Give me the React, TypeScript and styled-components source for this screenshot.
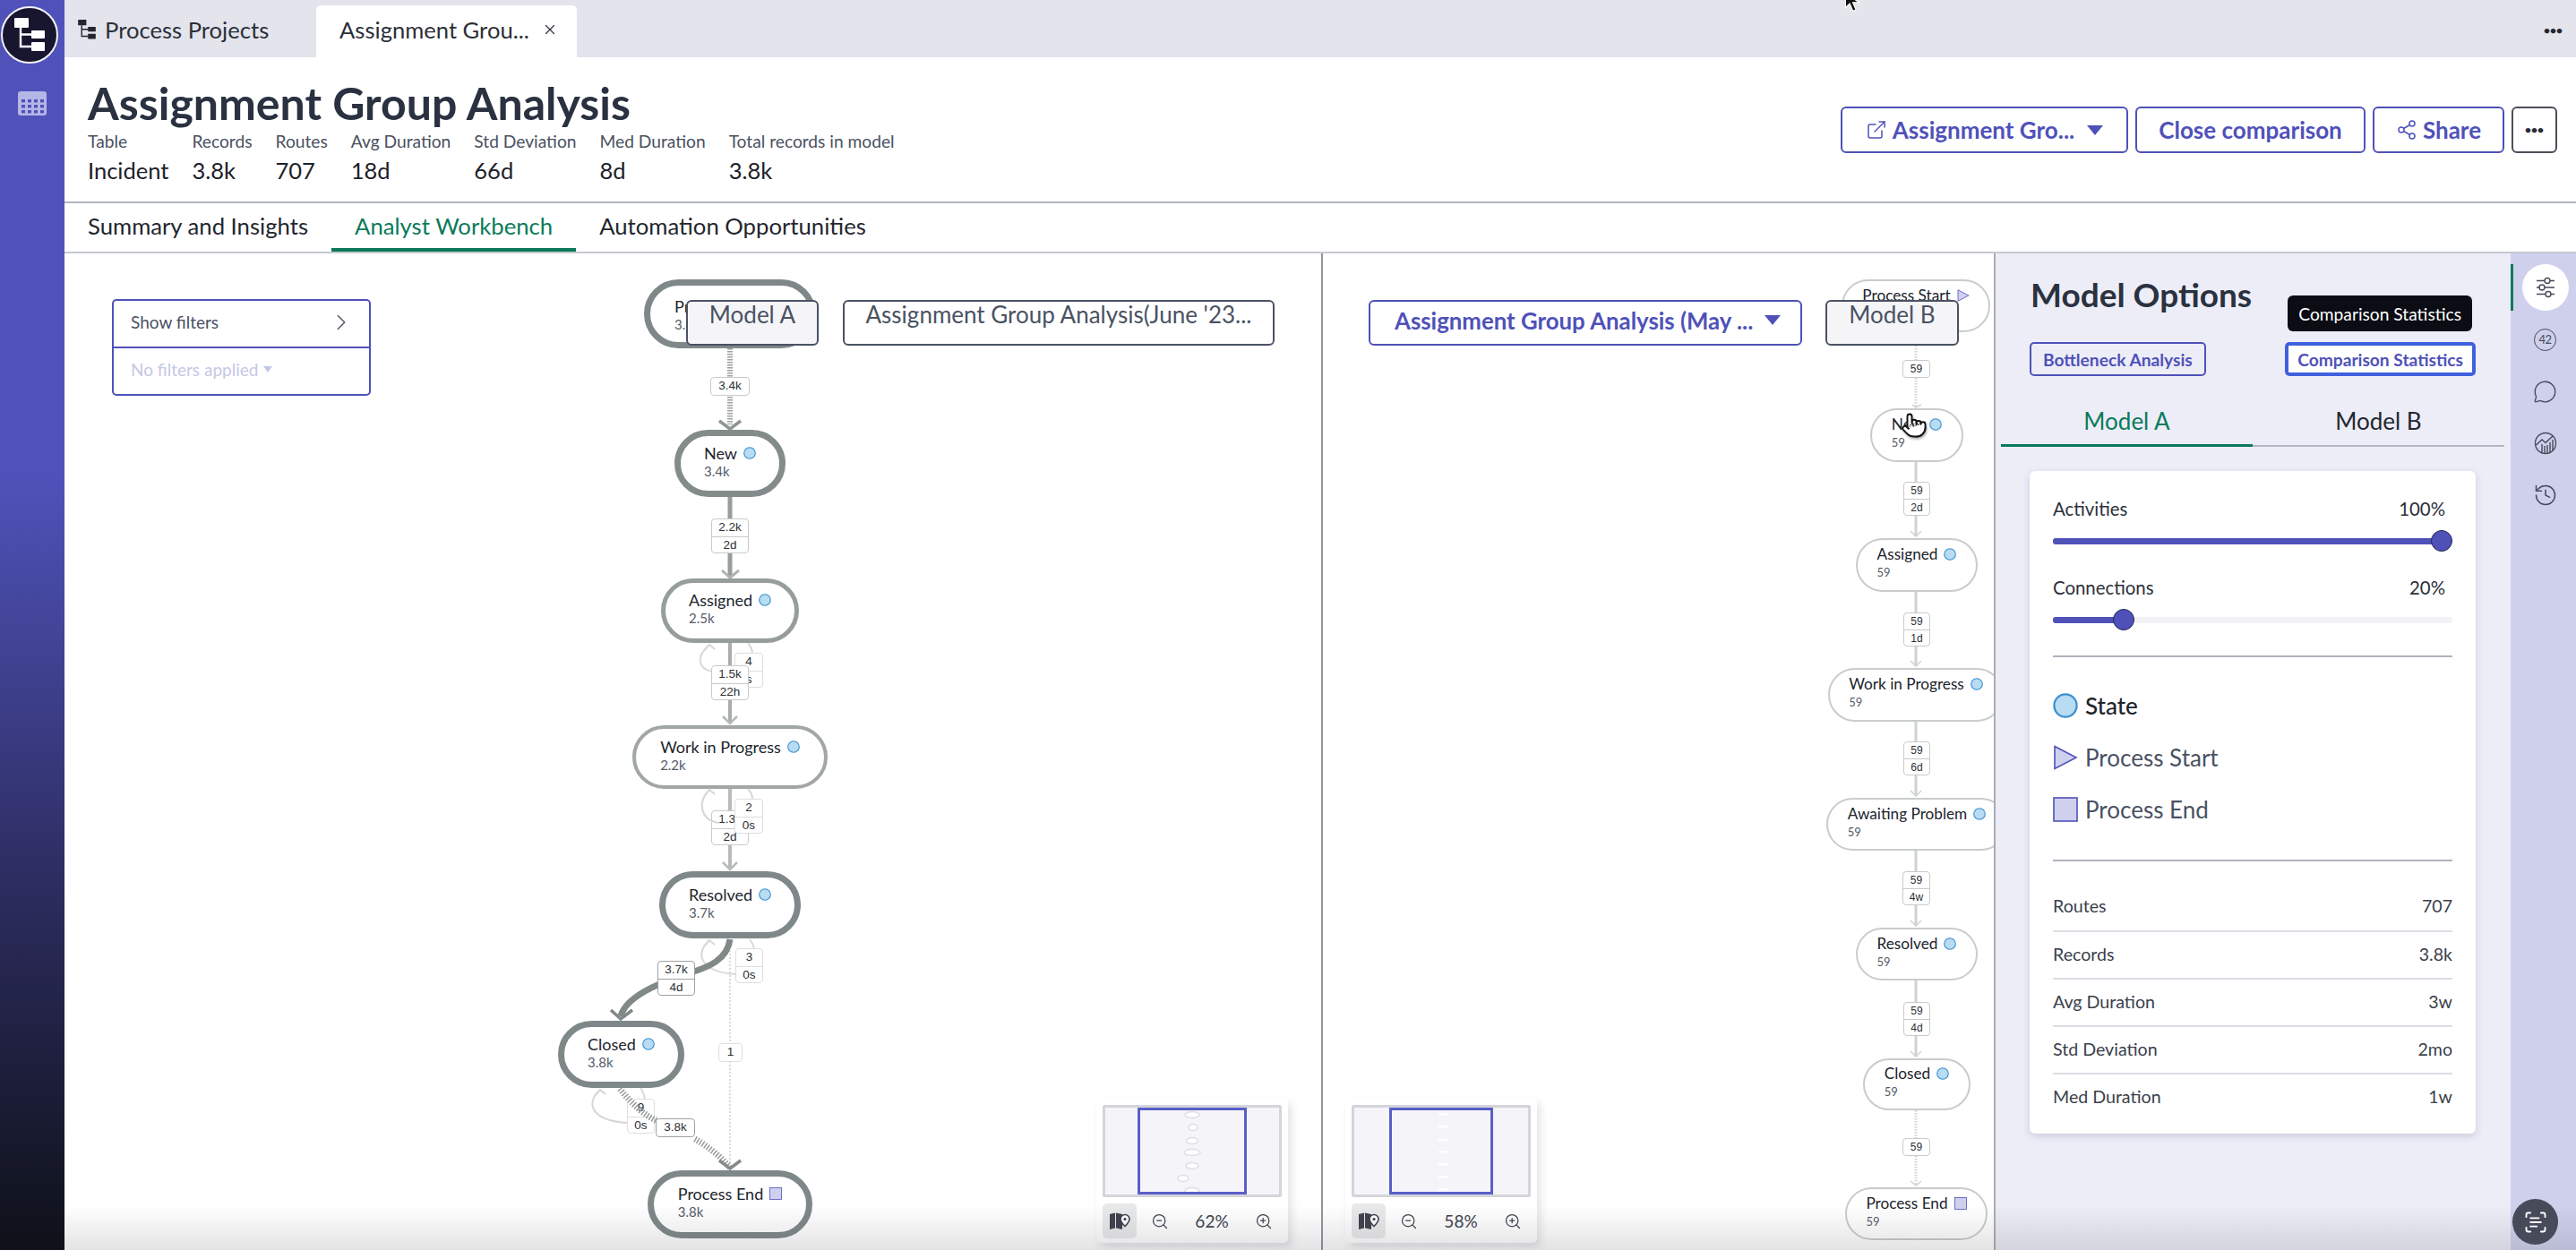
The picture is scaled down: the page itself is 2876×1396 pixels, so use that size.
import styled, { createGlobalStyle } from 'styled-components';
import {
  ChevronRight,
  ExternalLink,
  History,
  MessageCircle,
  Pointer,
  ScanText,
  Share2,
  X,
  ZoomIn,
  ZoomOut,
} from 'lucide-react';

const PURPLE = '#4f51b9';
const GREEN = '#0b7a5a';
const INK = '#2a3140';
const MUTED = '#4a5263';

const GlobalStyle = createGlobalStyle`
  html, body { margin: 0; padding: 0; width: 2876px; height: 1396px; overflow: hidden; background: #fff; }
  body { font-family: Lato, "Open Sans", sans-serif; color: #1d2129; }
  * { box-sizing: border-box; }
`;

const Page = styled.div`
  position: relative;
  display: flex;
  width: 2876px;
  height: 1396px;
  overflow: hidden;
`;

const BottomFade = styled.div`
  position: absolute;
  left: 72px;
  right: 0;
  bottom: 0;
  height: 50px;
  background: linear-gradient(rgba(60, 60, 70, 0), rgba(60, 60, 70, 0.14));
  pointer-events: none;
  z-index: 20;
`;

const LeftRail = styled.aside`
  position: relative;
  flex: 0 0 72px;
  display: flex;
  flex-direction: column;
  align-items: center;
  padding-top: 7px;
  gap: 31px;
  background: linear-gradient(#5052ba 0, #5052ba 38%, #4a4dac 43%, #2b2b5c 72%, #0e1118 100%);
`;

const LogoBadge = styled.div`
  width: 64px;
  height: 64px;
  margin-left: -6px;
  border-radius: 50%;
  background: #17162e;
  border: 2px solid #f2f2f6;
  display: flex;
  align-items: center;
  justify-content: center;
`;

const Main = styled.div`
  flex: 1;
  min-width: 0;
  display: flex;
  flex-direction: column;
`;

const TabStrip = styled.div`
  flex: 0 0 64px;
  display: flex;
  align-items: flex-end;
  background: #e3e4ec;
  position: relative;
`;

const ProjectTab = styled.div`
  width: 281px;
  height: 58px;
  display: flex;
  align-items: center;
  gap: 9px;
  padding: 0 0 4px 14px;
  font-size: 25.6px;
  color: #2b2f38;
`;

const ActiveTab = styled.div`
  width: 291px;
  height: 58px;
  display: flex;
  align-items: center;
  justify-content: space-between;
  padding: 0 21px 4px 26px;
  background: #fff;
  border-radius: 5px 5px 0 0;
  font-size: 25.6px;
  color: #2b2f38;
`;

const Dots = styled.span`
  font-size: 12px;
  font-weight: 900;
  line-height: 12px;
  letter-spacing: 0;
`;

const StripMore = styled.div`
  position: absolute;
  right: 15px;
  top: 28px;
  line-height: 0;
  color: #23262e;
`;

const MouseArrow = styled.svg`
  position: absolute;
  left: 1986px;
  top: -8px;
`;

const Header = styled.header`
  flex: 0 0 163px;
  display: flex;
  justify-content: space-between;
  padding: 21px 21px 0 26px;
  border-bottom: 2px solid #b0b5bf;
`;

const Title = styled.h1`
  margin: 0;
  font-size: 50px;
  line-height: 60px;
  font-weight: 700;
  color: ${INK};
`;

const Stats = styled.div`
  display: flex;
  gap: 26px;
`;

const Stat = styled.div`
  display: flex;
  flex-direction: column;
`;

const StatLabel = styled.span`
  font-size: 19.2px;
  line-height: 25px;
  color: #4a5160;
`;

const StatValue = styled.span`
  font-size: 25.5px;
  line-height: 40px;
  color: #1d2129;
`;

const Actions = styled.div`
  display: flex;
  gap: 8px;
  padding-top: 34px;
  height: 87px;
`;

const ActionButton = styled.button<{ $w: number; $dark?: boolean }>`
  width: ${(p) => p.$w}px;
  height: 52px;
  display: flex;
  align-items: center;
  justify-content: center;
  gap: 6px;
  background: #fff;
  border: 2px solid ${(p) => (p.$dark ? '#4a4e58' : PURPLE)};
  border-radius: 6px;
  font-family: inherit;
  font-size: 26px;
  font-weight: 700;
  color: ${(p) => (p.$dark ? '#2a2d36' : PURPLE)};
`;

const Caret = styled.span<{ $size?: number; $gap?: number }>`
  display: inline-block;
  width: 0;
  height: 0;
  margin-left: ${(p) => p.$gap ?? 0}px;
  border-left: ${(p) => p.$size ?? 9}px solid transparent;
  border-right: ${(p) => p.$size ?? 9}px solid transparent;
  border-top: ${(p) => (p.$size ?? 9) + 2}px solid currentColor;
`;

const NavTabs = styled.nav`
  flex: 0 0 54px;
  display: flex;
  border-bottom: 2px solid #c6c9cf;
`;

const NavTab = styled.div<{ $active?: boolean }>`
  height: 54px;
  padding: 0 26px;
  display: flex;
  align-items: center;
  font-size: 25.7px;
  color: ${(p) => (p.$active ? GREEN : '#23262e')};
  border-bottom: 4px solid ${(p) => (p.$active ? GREEN : 'transparent')};
`;

const Workspace = styled.div`
  flex: 1;
  min-height: 0;
  display: flex;
`;

const PaneA = styled.section`
  position: relative;
  flex: 0 0 1405px;
  border-right: 2px solid #8f949e;
  overflow: hidden;
`;

const PaneB = styled.section`
  position: relative;
  flex: 0 0 751px;
  border-right: 2px solid #a9adb8;
  overflow: hidden;
`;

const FilterBox = styled.div`
  position: absolute;
  left: 53px;
  top: 51px;
  width: 289px;
  height: 108px;
  display: flex;
  flex-direction: column;
  border: 2px solid ${PURPLE};
  border-radius: 5px;
  background: #fff;
`;

const FilterRow = styled.div`
  flex: 1;
  display: flex;
  align-items: center;
  justify-content: space-between;
  padding: 0 16px 4px 19px;
  font-size: 19px;
  color: #4a5263;

  & + & {
    border-top: 2px solid ${PURPLE};
    color: #c5c7e6;
    justify-content: flex-start;
    gap: 6px;
  }
`;

const Chip = styled.div<{ $x: number; $w: number; $tint?: boolean }>`
  position: absolute;
  left: ${(p) => p.$x}px;
  top: 52px;
  width: ${(p) => p.$w}px;
  height: 51px;
  text-align: center;
  white-space: nowrap;
  font-size: 26px;
  line-height: 28px;
  color: ${MUTED};
  background: ${(p) => (p.$tint ? '#f5f5f8' : '#fff')};
  border: 2px solid ${MUTED};
  border-radius: 6px;
  z-index: 5;
`;

const VersionSelect = styled.div`
  position: absolute;
  left: 51px;
  top: 52px;
  width: 484px;
  height: 51px;
  display: flex;
  align-items: center;
  justify-content: space-between;
  padding: 0 22px 6px 27px;
  font-size: 25.8px;
  font-weight: 700;
  color: ${PURPLE};
  border: 2px solid ${PURPLE};
  border-radius: 6px;
  background: #fff;
  z-index: 5;
  white-space: nowrap;
`;

const EdgeLayer = styled.svg`
  position: absolute;
  left: 0;
  top: 0;
  pointer-events: none;
`;

const NodeShell = styled.div<{ $x: number; $y: number; $w: number; $h: number; $bw: number; $c: string }>`
  position: absolute;
  left: ${(p) => p.$x}px;
  top: ${(p) => p.$y}px;
  width: ${(p) => p.$w}px;
  height: ${(p) => p.$h}px;
  display: flex;
  align-items: center;
  justify-content: center;
  background: #fff;
  border: ${(p) => p.$bw}px solid ${(p) => p.$c};
  border-radius: 999px;
`;

const NodeBody = styled.div<{ $drop?: number }>`
  display: flex;
  flex-direction: column;
  margin-top: ${(p) => (p.$drop ?? 0) - 6}px;
`;

const NodeLabel = styled.div<{ $fs: number }>`
  display: flex;
  align-items: center;
  gap: 7px;
  font-size: ${(p) => p.$fs}px;
  line-height: 22px;
  white-space: nowrap;
  color: #20242c;
`;

const NodeCount = styled.div<{ $fs: number }>`
  margin-top: 1px;
  font-size: ${(p) => p.$fs}px;
  line-height: 17px;
  color: #555b69;
`;

const EdgeLabel = styled.div<{ $x: number; $y: number; $w: number; $fs: number; $rh: number; $c?: string }>`
  position: absolute;
  left: ${(p) => p.$x}px;
  top: ${(p) => p.$y}px;
  width: ${(p) => p.$w}px;
  background: #fff;
  border: 1.5px solid ${(p) => p.$c ?? '#c8cacc'};
  border-radius: 4px;
  font-family: "Liberation Sans", Arial, sans-serif;
  font-size: ${(p) => p.$fs}px;
  color: #2b2f36;
  text-align: center;

  & > div {
    height: ${(p) => p.$rh}px;
    line-height: ${(p) => p.$rh}px;
  }

  & > div + div {
    border-top: 1.5px solid ${(p) => p.$c ?? '#c8cacc'};
  }
`;

const HandCursor = styled.div`
  position: absolute;
  left: 645px;
  top: 177px;
  z-index: 6;
  filter: drop-shadow(1px 2px 1px rgba(0, 0, 0, 0.3));
  line-height: 0;
`;

const MiniCard = styled.div<{ $x: number }>`
  position: absolute;
  left: ${(p) => p.$x}px;
  top: 944px;
  width: 214px;
  height: 161px;
  padding: 7px;
  background: #fff;
  border-radius: 5px;
  box-shadow: 4px 5px 10px rgba(60, 65, 80, 0.14);
  z-index: 6;
`;

const MiniFrame = styled.div`
  position: relative;
  height: 103px;
  display: flex;
  justify-content: center;
  background: #f5f5f9;
  border: 3px solid #d3d5da;
  border-radius: 2px;
`;

const MiniViewport = styled.div<{ $w: number }>`
  width: ${(p) => p.$w}px;
  border: 3px solid #5a5fc8;
  line-height: 0;
`;

const MiniControls = styled.div`
  display: flex;
  align-items: center;
  margin-top: 7px;
  height: 39px;
  color: #3d424e;
`;

const MapButton = styled.div`
  width: 38px;
  height: 39px;
  margin-right: 7px;
  display: flex;
  align-items: center;
  justify-content: center;
  background: #e8e9ea;
  border-radius: 5px;
`;

const ZoomButton = styled.div`
  width: 38px;
  display: flex;
  justify-content: center;
`;

const ZoomValue = styled.div`
  width: 78px;
  text-align: center;
  font-size: 19px;
`;

const ModelPanel = styled.aside`
  position: relative;
  flex: 0 0 575px;
  display: flex;
  flex-direction: column;
  background: #ecedf7;
`;

const PanelTitle = styled.h2`
  margin: 21px 0 0 39px;
  font-size: 37px;
  line-height: 50px;
  font-weight: 700;
  color: ${INK};
`;

const PanelButtons = styled.div`
  display: flex;
  justify-content: space-between;
  margin: 28px 39px 0 38px;
`;

const PanelButton = styled.button<{ $focus?: boolean }>`
  position: relative;
  height: 38px;
  padding: 0 ${(p) => (p.$focus ? 10 : 13)}px;
  background: ${(p) => (p.$focus ? '#fff' : 'transparent')};
  border: ${(p) => (p.$focus ? '4px solid #4060dd' : `2px solid ${PURPLE}`)};
  border-radius: 5px;
  font-family: inherit;
  font-size: 19.2px;
  font-weight: 700;
  color: ${PURPLE};
`;

const Tooltip = styled.div`
  position: absolute;
  right: 0;
  top: -56px;
  height: 40px;
  padding: 0 12px;
  display: flex;
  align-items: center;
  background: #0b0c14;
  border-radius: 6px;
  font-size: 19.2px;
  font-weight: 400;
  color: #fff;
  white-space: nowrap;
`;

const ModelTabs = styled.div`
  display: flex;
  margin: 30px 7px 0 6px;
  height: 49px;
`;

const ModelTab = styled.div<{ $active?: boolean }>`
  flex: 1;
  text-align: center;
  font-size: 26px;
  line-height: 40px;
  color: ${(p) => (p.$active ? GREEN : '#23262e')};
  border-bottom: ${(p) => (p.$active ? `3px solid ${GREEN}` : '2px solid #b4b7c2')};
`;

const OptionsCard = styled.div`
  margin: 27px 39px 0 38px;
  height: 740px;
  padding: 30px 26px 0;
  background: #fff;
  border-radius: 6px;
  box-shadow: 0 3px 8px rgba(70, 75, 110, 0.2);
`;

const SliderHead = styled.div`
  display: flex;
  justify-content: space-between;
  padding-right: 8px;
  font-size: 20.4px;
  line-height: 24px;
  color: #2c303a;
`;

const SliderTrack = styled.div`
  position: relative;
  height: 7px;
  margin: 21px 0 36px;
  background: #f3f3f5;
  border-radius: 3px;
`;

const SliderFill = styled.div<{ $w: number }>`
  width: ${(p) => p.$w}px;
  height: 100%;
  background: ${PURPLE};
  border-radius: 3px;
`;

const SliderThumb = styled.div<{ $x: number }>`
  position: absolute;
  left: ${(p) => p.$x}px;
  top: -9px;
  width: 24px;
  height: 24px;
  border-radius: 50%;
  background: ${PURPLE};
  border: 1.5px solid #23284f;
`;

const PanelRule = styled.hr<{ $mt: number }>`
  margin: ${(p) => p.$mt}px 0 0;
  border: 0;
  border-top: 2px solid #b0b3bd;
`;

const Legend = styled.div`
  display: flex;
  flex-direction: column;
  gap: 30px;
  margin-top: 40px;
`;

const LegendRow = styled.div<{ $strong?: boolean }>`
  display: flex;
  align-items: center;
  gap: 8px;
  height: 28px;
  font-size: 26px;
  font-weight: ${(p) => (p.$strong ? 500 : 400)};
  color: ${(p) => (p.$strong ? '#20242c' : MUTED)};
`;

const MetricList = styled.div`
  margin-top: 24px;
`;

const MetricRow = styled.div`
  display: flex;
  justify-content: space-between;
  align-items: center;
  height: 53px;
  padding-bottom: 3px;
  font-size: 19.6px;
  color: #3a3f4b;

  & + & {
    border-top: 2px solid #dcdde4;
  }
`;

const IconRail = styled.aside`
  position: relative;
  flex: 1;
  display: flex;
  flex-direction: column;
  align-items: center;
  padding: 12px 0 0 4px;
  background: #cfd0ec;
  color: #474a59;
`;

const RailMarker = styled.div`
  position: absolute;
  left: 0;
  top: 12px;
  width: 3px;
  height: 52px;
  background: ${GREEN};
`;

const RailItem = styled.div<{ $active?: boolean }>`
  width: 52px;
  height: 52px;
  margin-bottom: 6px;
  display: flex;
  align-items: center;
  justify-content: center;
  border-radius: 50%;
  background: ${(p) => (p.$active ? '#fff' : 'transparent')};
`;

const CountBadge = styled.div`
  width: 25px;
  height: 25px;
  display: flex;
  align-items: center;
  justify-content: center;
  border: 1.5px solid #474a59;
  border-radius: 50%;
  font-size: 13px;
  letter-spacing: -0.5px;
`;

const ScanButton = styled.div`
  position: absolute;
  left: 2px;
  bottom: 6px;
  width: 51px;
  height: 51px;
  display: flex;
  align-items: center;
  justify-content: center;
  border-radius: 50%;
  background: #474a59;
  color: #fff;
  z-index: 21;
`;

type Shape = 'dot' | 'start' | 'end';

const Marker = ({ shape, size = 14 }: { shape: Shape; size?: number }) => (
  <svg width={size} height={size} viewBox="0 0 28 28">
    {shape === 'dot' && <circle cx="14" cy="14" r="12.6" fill="#b8dcf2" stroke="#3b8fd0" strokeWidth="2.2" />}
    {shape === 'start' && <path d="M2 1.5 L26 14 L2 26.5 Z" fill="#cfd0ee" stroke={PURPLE} strokeWidth="1.6" />}
    {shape === 'end' && <rect x="1" y="1" width="26" height="26" fill="#cfd0ee" stroke={PURPLE} strokeWidth="1.6" />}
  </svg>
);

const TreeLogo = ({ color, size }: { color: string; size: number }) => (
  <svg width={size} height={size} viewBox="0 0 36 38">
    <rect x="1" y="0" width="16" height="11" rx="1" fill={color} />
    <rect x="20" y="14" width="15" height="9" rx="1" fill={color} />
    <rect x="20" y="27" width="15" height="10" rx="1" fill={color} />
    <path d="M8 11 V32 H20 M8 18.5 H20" fill="none" stroke={color} strokeWidth="2.4" />
  </svg>
);

const GridIcon = () => (
  <svg width="32" height="27" viewBox="0 0 32 27">
    <rect width="32" height="27" rx="3" fill="#b4b6e6" />
    {[9, 15, 21].map((y) =>
      [4, 11, 18, 25].map((x) => <rect key={`${x}-${y}`} x={x} y={y} width="4" height="3.4" fill={PURPLE} />),
    )}
  </svg>
);

const SlidersIcon = () => (
  <svg width="24" height="24" viewBox="0 0 24 24" fill="none" stroke="#474a59" strokeWidth="1.4">
    <path d="M2 4.5 H11 M17 4.5 H22 M2 12 H5 M11 12 H22 M2 19.5 H12 M18 19.5 H22" />
    <circle cx="14" cy="4.5" r="3" />
    <circle cx="8" cy="12" r="3" />
    <circle cx="15" cy="19.5" r="3" />
  </svg>
);

const GrowthIcon = () => (
  <svg width="26" height="26" viewBox="0 0 26 26" fill="none" stroke="#474a59" strokeWidth="1.4">
    <circle cx="13" cy="13" r="11.5" />
    <path d="M2.5 15 L9 9 L13 12.5 L21 5" />
    <path d="M9 14 V24 M12 16 V24.6 M15 15 V24.6 M18 12 V23.5 M21 9 V21" />
  </svg>
);

const MapIcon = () => (
  <svg width="24" height="22" viewBox="0 0 24 22">
    <path d="M1 3 L7 1.5 V18.5 L1 20 Z" fill="#3d424e" />
    <path d="M8 1.5 L15 3 V20 L8 18.5 Z" fill="#3d424e" />
    <path
      d="M18 3.5 a5 5 0 0 1 5 5 c0 3 -5 8 -5 8 c0 0 -5 -5 -5 -8 a5 5 0 0 1 5 -5 Z"
      fill="#fff"
      stroke="#3d424e"
      strokeWidth="1.6"
    />
    <circle cx="18" cy="8.5" r="1.6" fill="#3d424e" />
  </svg>
);

type GraphNode = {
  label: string;
  count: string;
  x: number;
  y: number;
  w: number;
  h: number;
  bw: number;
  c: string;
  shape: Shape;
  drop?: number;
};

type Edge = { d: string; w: number; c: string; dash?: string };

type Badge = { rows: string[]; x: number; y: number; w: number; c?: string };

const A_X = 72;
const B_X = 1478;
const TOP = 281;

const nodesA: GraphNode[] = [
  { label: 'Process Start', count: '3.8k', x: 719, y: 310, w: 192, h: 77, bw: 7, c: '#7f8888', shape: 'start', drop: 6 },
  { label: 'New', count: '3.4k', x: 753, y: 478, w: 124, h: 75, bw: 7, c: '#848b8b', shape: 'dot' },
  { label: 'Assigned', count: '2.5k', x: 738, y: 644, w: 154, h: 72, bw: 5.5, c: '#979d9d', shape: 'dot' },
  { label: 'Work in Progress', count: '2.2k', x: 706, y: 808, w: 218, h: 71, bw: 4.5, c: '#a1a6a6', shape: 'dot' },
  { label: 'Resolved', count: '3.7k', x: 736, y: 971, w: 158, h: 75, bw: 7.5, c: '#7f8888', shape: 'dot' },
  { label: 'Closed', count: '3.8k', x: 623, y: 1138, w: 141, h: 75, bw: 7.5, c: '#7f8888', shape: 'dot' },
  { label: 'Process End', count: '3.8k', x: 723, y: 1305, w: 184, h: 76, bw: 7.5, c: '#7f8888', shape: 'end' },
];

const nodesB: GraphNode[] = [
  { label: 'Process Start', count: '59', x: 2057, y: 310, w: 166, h: 59, bw: 2, c: '#c9cccc', shape: 'start' },
  { label: 'New', count: '59', x: 2089, y: 454, w: 104, h: 60, bw: 2, c: '#c9cccc', shape: 'dot' },
  { label: 'Assigned', count: '59', x: 2073, y: 599, w: 136, h: 60, bw: 2, c: '#c9cccc', shape: 'dot' },
  { label: 'Work in Progress', count: '59', x: 2042, y: 744, w: 196, h: 60, bw: 2, c: '#c9cccc', shape: 'dot' },
  { label: 'Awaiting Problem', count: '59', x: 2040, y: 889, w: 202, h: 59, bw: 2, c: '#c9cccc', shape: 'dot' },
  { label: 'Resolved', count: '59', x: 2073, y: 1034, w: 136, h: 59, bw: 2, c: '#c9cccc', shape: 'dot' },
  { label: 'Closed', count: '59', x: 2081, y: 1180, w: 120, h: 58, bw: 2, c: '#c9cccc', shape: 'dot' },
  { label: 'Process End', count: '59', x: 2061, y: 1324, w: 159, h: 59, bw: 2, c: '#c9cccc', shape: 'end' },
];

const loop = (fromX: number, fromY: number, reach: number, toX: number, toY: number) =>
  `M${fromX} ${fromY} C${reach} ${fromY - 3} ${reach - 4} ${toY + 14} ${toX} ${toY} M${toX - 5} ${toY + 6} L${toX} ${toY} L${toX + 6} ${toY + 5}`;

const edgesA: Edge[] = [
  { d: 'M815 387 V472', w: 6, c: '#9aa0a0', dash: '1.5 1.5' },
  { d: 'M803 468 L815 477 L827 468', w: 3.5, c: '#8f9494' },
  { d: 'M815 553 V642', w: 5, c: '#979d9d' },
  { d: 'M806 635 L815 643 L825 635', w: 3, c: '#aeb2b2' },
  { d: 'M815 716 V806', w: 4, c: '#a9adad' },
  { d: 'M807 798 L815 806 L823 798', w: 2.5, c: '#b5b8b8' },
  { d: 'M815 879 V969', w: 4, c: '#b8bbbb' },
  { d: 'M807 961 L815 969 L823 961', w: 2.5, c: '#b8bbbb' },
  { d: 'M815 1047 V1305', w: 2, c: '#dadbdb', dash: '2 2' },
  { d: loop(795, 748, 780, 792, 718), w: 2, c: '#d6d8d8' },
  { d: 'M835 716 Q840 722 840 728', w: 2, c: '#d6d8d8' },
  { d: 'M835 879 Q840 884 840 890', w: 2, c: '#d6d8d8' },
  { d: loop(821, 1086, 780, 792, 1048), w: 2, c: '#d6d8d8' },
  { d: 'M837 1047 Q841 1052 842 1058', w: 2, c: '#d6d8d8' },
  { d: loop(700, 1252, 658, 670, 1215), w: 2, c: '#d6d8d8' },
  { d: 'M715 1213 Q719 1218 720 1226', w: 2, c: '#d6d8d8' },
  { d: 'M815 1047 C812 1070 790 1078 775 1083 S700 1105 693 1133', w: 7, c: '#808888' },
  { d: 'M682 1126 L693 1136 L706 1126', w: 3.5, c: '#808888' },
  { d: 'M776 1270 C790 1278 805 1290 815 1302', w: 7, c: '#8a8f8f', dash: '1.3 2' },
  { d: 'M803 1294 L815 1303 L827 1294', w: 3.5, c: '#858b8b' },
];

const edgesOverA: Edge[] = [
  { d: loop(803, 917, 782, 792, 880), w: 2, c: '#d6d8d8' },
  { d: 'M692 1214 C705 1230 718 1243 734 1250', w: 7, c: '#8a8f8f', dash: '1.3 2' },
];

const badgesA: Badge[] = [
  { rows: ['3.4k'], x: 793, y: 419, w: 44 },
  { rows: ['2.2k', '2d'], x: 794, y: 577, w: 42 },
  { rows: ['4', 's'], x: 820, y: 727, w: 32, c: '#dcdee0' },
  { rows: ['1.5k', '22h'], x: 794, y: 741, w: 42 },
  { rows: ['1.3k', '2d'], x: 794, y: 903, w: 42 },
  { rows: ['3.7k', '4d'], x: 734, y: 1071, w: 42, c: '#9ea2a6' },
  { rows: ['3', '0s'], x: 821, y: 1057, w: 31, c: '#dcdee0' },
  { rows: ['1'], x: 802, y: 1163, w: 27, c: '#dcdee0' },
  { rows: ['9', '0s'], x: 700, y: 1225, w: 31, c: '#dcdee0' },
];

const badgesOverA: Badge[] = [
  { rows: ['2', '0s'], x: 820, y: 890, w: 32, c: '#dcdee0' },
  { rows: ['3.8k'], x: 732, y: 1247, w: 44, c: '#9ea2a6' },
];

const edgesB: Edge[] = [
  { d: 'M2140 369 V452', w: 3, c: '#d5d6d6', dash: '1.5 1.5' },
  { d: 'M2136 450 L2140 453 L2146 450', w: 1.5, c: '#cfd2d2' },
  { d: 'M2140 514 V597', w: 3, c: '#cfd2d2' },
  { d: 'M2134 591 L2140 597 L2146 591', w: 1.5, c: '#cfd2d2' },
  { d: 'M2140 659 V742', w: 3, c: '#cfd2d2' },
  { d: 'M2134 736 L2140 742 L2146 736', w: 1.5, c: '#cfd2d2' },
  { d: 'M2140 804 V887', w: 3, c: '#cfd2d2' },
  { d: 'M2134 881 L2140 887 L2146 881', w: 1.5, c: '#cfd2d2' },
  { d: 'M2140 948 V1032', w: 3, c: '#cfd2d2' },
  { d: 'M2134 1026 L2140 1032 L2146 1026', w: 1.5, c: '#cfd2d2' },
  { d: 'M2140 1093 V1178', w: 3, c: '#cfd2d2' },
  { d: 'M2134 1172 L2140 1178 L2146 1172', w: 1.5, c: '#cfd2d2' },
  { d: 'M2140 1238 V1322', w: 3, c: '#d5d6d6', dash: '1.5 1.5' },
  { d: 'M2134 1317 L2140 1322 L2146 1317', w: 1.5, c: '#cfd2d2' },
];

const badgesB: Badge[] = [
  { rows: ['59'], x: 2125, y: 400, w: 31 },
  { rows: ['59', '2d'], x: 2126, y: 536, w: 30 },
  { rows: ['59', '1d'], x: 2126, y: 682, w: 30 },
  { rows: ['59', '6d'], x: 2126, y: 826, w: 30 },
  { rows: ['59', '4w'], x: 2125, y: 971, w: 31 },
  { rows: ['59', '4d'], x: 2126, y: 1117, w: 30 },
  { rows: ['59'], x: 2125, y: 1269, w: 31 },
];

const Edges = ({ edges, ox }: { edges: Edge[]; ox: number }) => (
  <EdgeLayer width="1405" height="1115" viewBox={`${ox} ${TOP} 1405 1115`} fill="none">
    {edges.map((e) => (
      <path key={e.d} d={e.d} stroke={e.c} strokeWidth={e.w} strokeDasharray={e.dash} />
    ))}
  </EdgeLayer>
);

const Nodes = ({ nodes, ox, fs, cfs }: { nodes: GraphNode[]; ox: number; fs: number; cfs: number }) => (
  <>
    {nodes.map((n) => (
      <NodeShell key={n.label} $x={n.x - ox} $y={n.y - TOP} $w={n.w} $h={n.h} $bw={n.bw} $c={n.c}>
        <NodeBody $drop={n.drop}>
          <NodeLabel $fs={fs}>
            {n.label}
            <Marker shape={n.shape} />
          </NodeLabel>
          <NodeCount $fs={cfs}>{n.count}</NodeCount>
        </NodeBody>
      </NodeShell>
    ))}
  </>
);

const Badges = ({ badges, ox, fs, rh }: { badges: Badge[]; ox: number; fs: number; rh: number }) => (
  <>
    {badges.map((b) => (
      <EdgeLabel key={`${b.x}-${b.y}`} $x={b.x - ox} $y={b.y - TOP} $w={b.w} $fs={fs} $rh={rh} $c={b.c}>
        {b.rows.map((r) => (
          <div key={r}>{r}</div>
        ))}
      </EdgeLabel>
    ))}
  </>
);

const miniOvals = [
  { cx: 58, cy: 8, rx: 8 },
  { cx: 59, cy: 22, rx: 5 },
  { cx: 58, cy: 37, rx: 6.5 },
  { cx: 58, cy: 50, rx: 9 },
  { cx: 58, cy: 65, rx: 7 },
  { cx: 48, cy: 79, rx: 6 },
  { cx: 58, cy: 93, rx: 8 },
];

const MiniMap = ({ x, width, zoom, faint }: { x: number; width: number; zoom: string; faint?: boolean }) => (
  <MiniCard $x={x}>
    <MiniFrame>
      <MiniViewport $w={width}>
        <svg width={width - 6} height="91" viewBox={`0 0 ${width - 6} 91`}>
          {faint
            ? [4, 18, 33, 46, 60, 74, 88].map((cy) => <rect key={cy} x={52} y={cy - 1} width="10" height="2.5" fill="#fff" />)
            : miniOvals.map((o) => (
                <ellipse key={o.cy} cx={o.cx} cy={o.cy - 3} rx={o.rx} ry="3.4" fill="#fff" stroke="#dcdee0" strokeWidth="1.5" />
              ))}
        </svg>
      </MiniViewport>
    </MiniFrame>
    <MiniControls>
      <MapButton>
        <MapIcon />
      </MapButton>
      <ZoomButton>
        <ZoomOut size={20} strokeWidth={1.5} />
      </ZoomButton>
      <ZoomValue>{zoom}</ZoomValue>
      <ZoomButton>
        <ZoomIn size={20} strokeWidth={1.5} />
      </ZoomButton>
    </MiniControls>
  </MiniCard>
);

const stats = [
  ['Table', 'Incident'],
  ['Records', '3.8k'],
  ['Routes', '707'],
  ['Avg Duration', '18d'],
  ['Std Deviation', '66d'],
  ['Med Duration', '8d'],
  ['Total records in model', '3.8k'],
];

const metrics = [
  ['Routes', '707'],
  ['Records', '3.8k'],
  ['Avg Duration', '3w'],
  ['Std Deviation', '2mo'],
  ['Med Duration', '1w'],
];

export default function App() {
  return (
    <Page>
      <GlobalStyle />
      <LeftRail>
        <LogoBadge>
          <TreeLogo color="#fff" size={38} />
        </LogoBadge>
        <GridIcon />
      </LeftRail>
      <Main>
        <TabStrip>
          <ProjectTab>
            <TreeLogo color="#23262e" size={22} />
            Process Projects
          </ProjectTab>
          <ActiveTab>
            Assignment Grou...
            <X size={18} strokeWidth={1.6} />
          </ActiveTab>
          <StripMore>
            <Dots>•••</Dots>
          </StripMore>
          <MouseArrow width="26" height="24" viewBox="0 0 22 20">
            <path d="M2 0 L2 14 L6 10 L9 17 L12 16 L9 9 L15 9 Z" fill="#111" stroke="#fff" strokeWidth="1" />
          </MouseArrow>
        </TabStrip>
        <Header>
          <div>
            <Title>Assignment Group Analysis</Title>
            <Stats>
              {stats.map(([label, value]) => (
                <Stat key={label}>
                  <StatLabel>{label}</StatLabel>
                  <StatValue>{value}</StatValue>
                </Stat>
              ))}
            </Stats>
          </div>
          <Actions>
            <ActionButton $w={321}>
              <ExternalLink size={24} strokeWidth={1.5} />
              Assignment Gro...
              <Caret $gap={8} />
            </ActionButton>
            <ActionButton $w={257}>Close comparison</ActionButton>
            <ActionButton $w={147}>
              <Share2 size={24} strokeWidth={1.5} />
              Share
            </ActionButton>
            <ActionButton $w={51} $dark>
              <Dots>•••</Dots>
            </ActionButton>
          </Actions>
        </Header>
        <NavTabs>
          <NavTab>Summary and Insights</NavTab>
          <NavTab $active>Analyst Workbench</NavTab>
          <NavTab>Automation Opportunities</NavTab>
        </NavTabs>
        <Workspace>
          <PaneA>
            <Edges edges={edgesA} ox={A_X} />
            <Badges badges={badgesA} ox={A_X} fs={13.5} rh={18.5} />
            <Nodes nodes={nodesA} ox={A_X} fs={18} cfs={15} />
            <Edges edges={edgesOverA} ox={A_X} />
            <Badges badges={badgesOverA} ox={A_X} fs={13.5} rh={18.5} />
            <FilterBox>
              <FilterRow>
                Show filters
                <ChevronRight size={30} strokeWidth={1.1} />
              </FilterRow>
              <FilterRow>
                No filters applied
                <Caret $size={5} />
              </FilterRow>
            </FilterBox>
            <Chip $x={694} $w={148} $tint>
              Model A
            </Chip>
            <Chip $x={869} $w={482}>
              Assignment Group Analysis(June '23...
            </Chip>
            <MiniMap x={1152} width={122} zoom="62%" />
          </PaneA>
          <PaneB>
            <Edges edges={edgesB} ox={B_X} />
            <Badges badges={badgesB} ox={B_X} fs={12} rh={18} />
            <Nodes nodes={nodesB} ox={B_X} fs={17.2} cfs={13} />
            <VersionSelect>
              Assignment Group Analysis (May ...
              <Caret />
            </VersionSelect>
            <Chip $x={561} $w={149} $tint>
              Model B
            </Chip>
            <HandCursor>
              <Pointer size={30} fill="#fff" color="#111" strokeWidth={1.5} />
            </HandCursor>
            <MiniMap x={25} width={116} zoom="58%" faint />
          </PaneB>
          <ModelPanel>
            <PanelTitle>Model Options</PanelTitle>
            <PanelButtons>
              <PanelButton>Bottleneck Analysis</PanelButton>
              <PanelButton $focus>
                Comparison Statistics
                <Tooltip>Comparison Statistics</Tooltip>
              </PanelButton>
            </PanelButtons>
            <ModelTabs>
              <ModelTab $active>Model A</ModelTab>
              <ModelTab>Model B</ModelTab>
            </ModelTabs>
            <OptionsCard>
              <SliderHead>
                <span>Activities</span>
                <span>100%</span>
              </SliderHead>
              <SliderTrack>
                <SliderFill $w={440} />
                <SliderThumb $x={422} />
              </SliderTrack>
              <SliderHead>
                <span>Connections</span>
                <span>20%</span>
              </SliderHead>
              <SliderTrack>
                <SliderFill $w={72} />
                <SliderThumb $x={67} />
              </SliderTrack>
              <PanelRule $mt={3} />
              <Legend>
                <LegendRow $strong>
                  <Marker shape="dot" size={28} />
                  State
                </LegendRow>
                <LegendRow>
                  <Marker shape="start" size={28} />
                  Process Start
                </LegendRow>
                <LegendRow>
                  <Marker shape="end" size={28} />
                  Process End
                </LegendRow>
              </Legend>
              <PanelRule $mt={42} />
              <MetricList>
                {metrics.map(([label, value]) => (
                  <MetricRow key={label}>
                    <span>{label}</span>
                    <span>{value}</span>
                  </MetricRow>
                ))}
              </MetricList>
            </OptionsCard>
          </ModelPanel>
          <IconRail>
            <RailMarker />
            <RailItem $active>
              <SlidersIcon />
            </RailItem>
            <RailItem>
              <CountBadge>42</CountBadge>
            </RailItem>
            <RailItem>
              <MessageCircle size={27} strokeWidth={1.2} />
            </RailItem>
            <RailItem>
              <GrowthIcon />
            </RailItem>
            <RailItem>
              <History size={28} strokeWidth={1.3} />
            </RailItem>
            <ScanButton>
              <ScanText size={28} strokeWidth={1.6} />
            </ScanButton>
          </IconRail>
        </Workspace>
      </Main>
      <BottomFade />
    </Page>
  );
}
